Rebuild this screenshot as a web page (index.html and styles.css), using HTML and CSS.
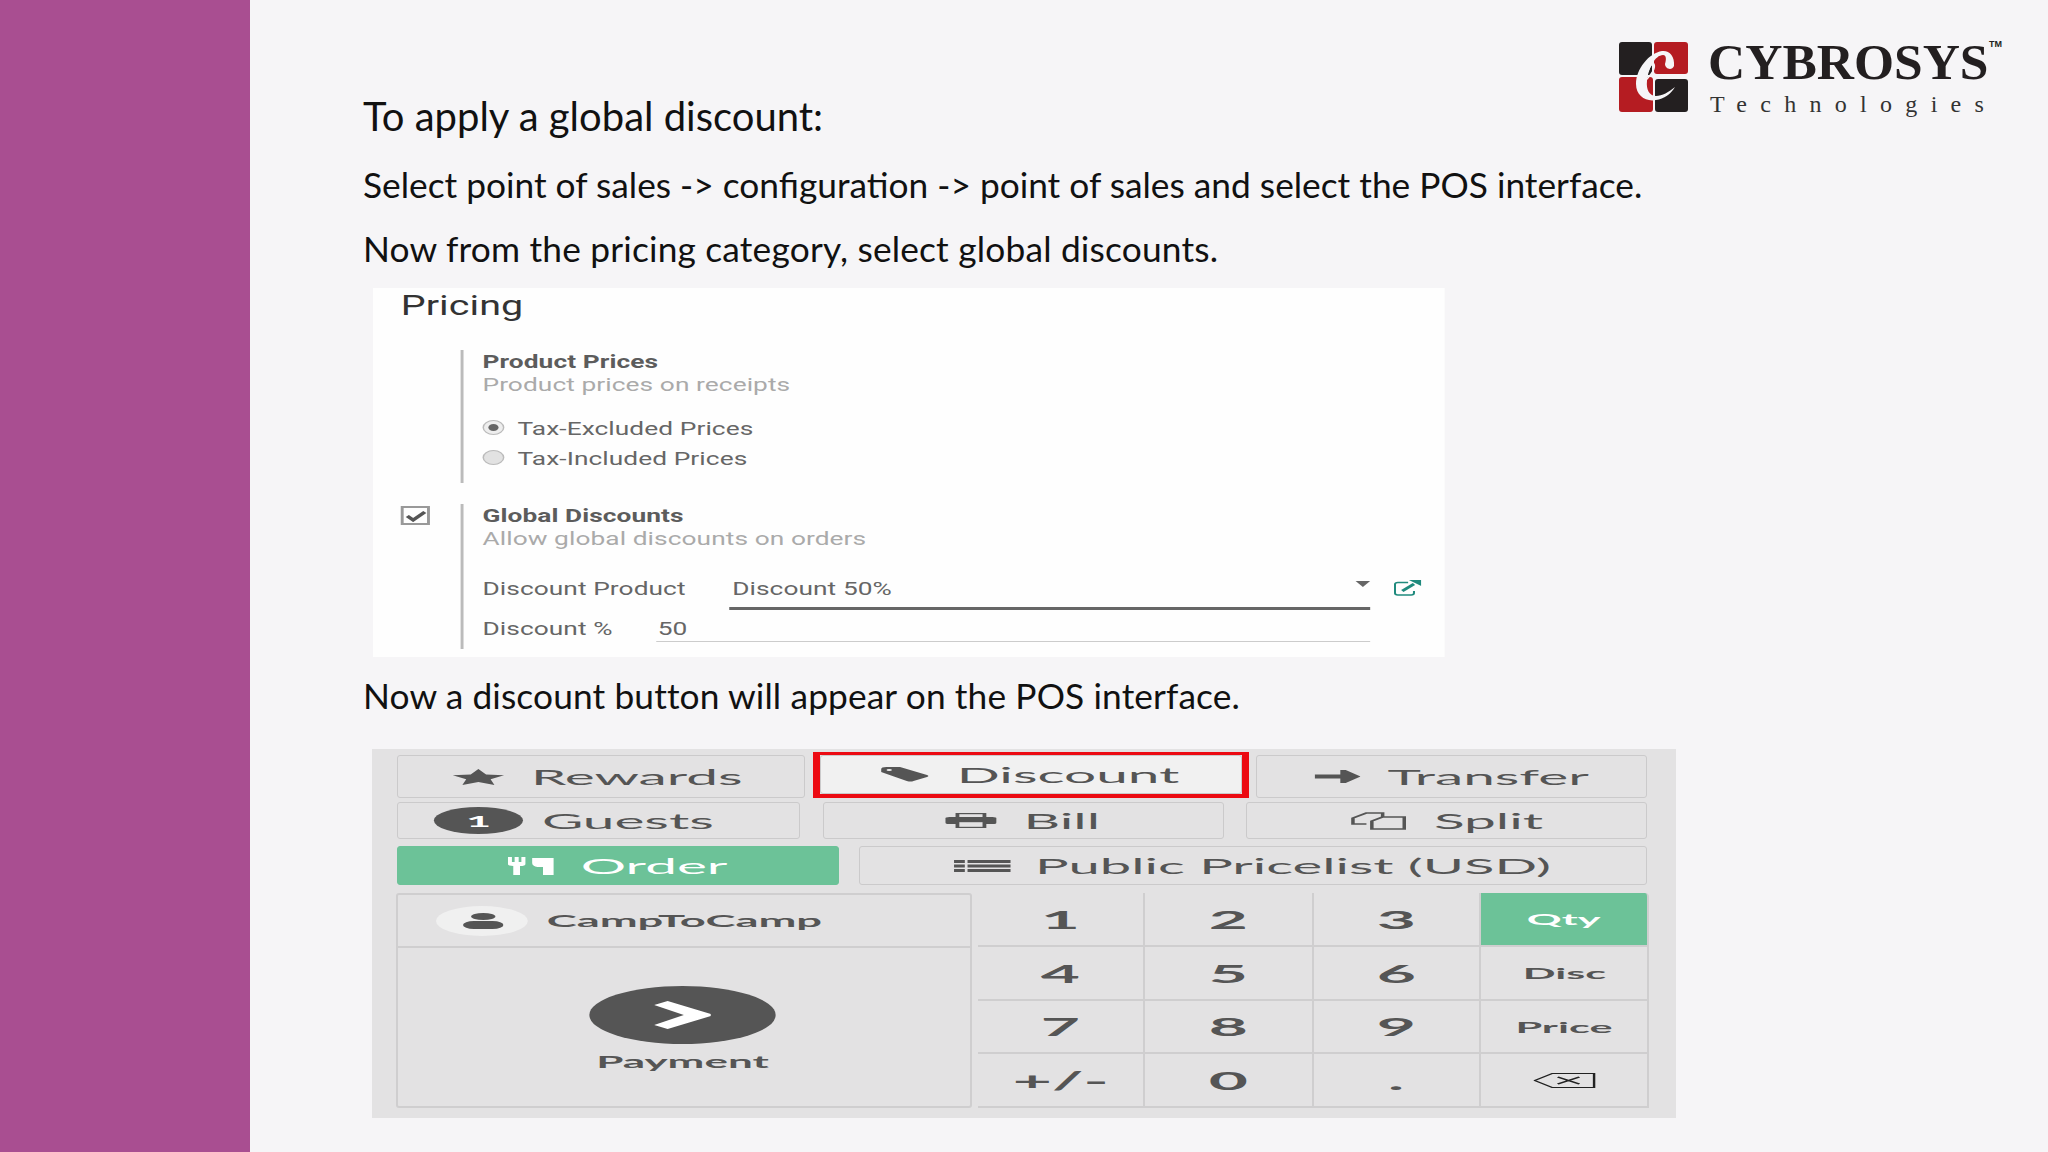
FILE: index.html
```html
<!DOCTYPE html>
<html lang="en">
<head>
    <meta charset="UTF-8">
    <title>Global discount</title>
    <link rel="stylesheet" href="styles.css">
</head>
<body>

<div class="sidebar"></div>

<div class="main">

    <div class="logo">
        <svg class="logo-mark" width="69" height="70" viewBox="0 0 69 70">
            <rect x="0" y="0" width="33" height="33" rx="3" fill="#231f20"/>
            <rect x="35" y="0" width="34" height="32" rx="3" fill="#b51c22"/>
            <rect x="0" y="35" width="34" height="35" rx="3" fill="#b51c22"/>
            <rect x="36" y="37" width="33" height="33" rx="3" fill="#231f20"/>
            <path fill="#f6f5f7" d="M55 24C56 14 50 8 43 9C30 11 17 27 17 42C17 54 27 60 37 58C45 57 52 52 56 45C50 50 43 54 37 54C30 54 27 47 28 39C29 27 36 13 44 13C48 13 47 19 46 22C46 27 53 29 55 24Z"/>
            <path fill="none" stroke="#f6f5f7" stroke-width="1.5" d="M26 39C32 33 37 27 35 22C33 20 28 28 26 39"/>
        </svg>
        <div class="logo-text">
            <div class="logo-name">CYBROSYS<span class="logo-tm">TM</span></div>
            <div class="logo-sub">Technologies</div>
        </div>
    </div>

    <h1 class="title">To apply a global discount:</h1>
    <p class="line line-select">Select point of sales -&gt; configuration -&gt; point of sales and select the POS interface.</p>
    <p class="line line-now">Now from the pricing category, select global discounts.</p>

    <div class="pricing">
        <h2>Pricing</h2>

        <div class="setting setting-prices">
            <div class="check-col"></div>
            <div class="setting-body">
                <div class="setting-title">Product Prices</div>
                <div class="setting-sub">Product prices on receipts</div>
                <div class="radios">
                    <div class="radio-row"><span class="radio on"></span>Tax-Excluded Prices</div>
                    <div class="radio-row"><span class="radio"></span>Tax-Included Prices</div>
                </div>
            </div>
        </div>

        <div class="setting setting-discounts">
            <div class="check-col">
                <div class="checkbox">
                    <svg width="15" height="12" viewBox="0 0 15 12"><path d="M1.5 6L5.5 10L13.5 2" fill="none" stroke="#555" stroke-width="3"/></svg>
                </div>
            </div>
            <div class="setting-body">
                <div class="setting-title">Global Discounts</div>
                <div class="setting-sub">Allow global discounts on orders</div>
                <div class="field field-product">
                    <span class="field-label">Discount Product</span>
                    <span class="field-value">Discount 50%<span class="caret"></span></span>
                    <svg class="ext" width="19" height="16" viewBox="0 0 19 16">
                        <path d="M10 2.5H3Q1 2.5 1 4.5V13Q1 15 3 15H12Q14 15 14 13V11" fill="none" stroke="#1f8a7d" stroke-width="1.4"/>
                        <path d="M6 11L14 4" fill="none" stroke="#1f8a7d" stroke-width="2.4"/>
                        <path d="M10.5 0H19V6Z" fill="#1f8a7d"/>
                    </svg>
                </div>
                <div class="field field-percent">
                    <span class="field-label">Discount %</span>
                    <span class="field-value">50</span>
                </div>
            </div>
        </div>
    </div>

    <p class="line line-appear">Now a discount button will appear on the POS interface.</p>

    <div class="pos">
        <div class="pos-row row-one">
            <div class="btn"><div class="wide wide-rewards">
                <svg width="19" height="16" viewBox="0 0 24 23" preserveAspectRatio="none"><path fill="#555" d="M12 0L15.6 8L24 9L17.7 14.6L19.5 23L12 18.7L4.5 23L6.3 14.6L0 9L8.4 8Z"/></svg>
                Rewards
            </div></div>
            <div class="highlight"><div class="btn btn-light"><div class="wide">
                <svg width="18" height="15" viewBox="0 0 18 15"><path fill="#555" d="M0 2Q0 0 2 0H7L17 8Q18 9 17 10L12 14Q11 15 9.5 14L0 5Z"/><circle cx="3" cy="3" r="1" fill="#f0f0f0"/></svg>
                Discount
            </div></div></div>
            <div class="btn"><div class="wide">
                <svg width="17" height="15" viewBox="0 0 17 15"><path fill="#555" d="M0 5.500H9.500V1L11.500 1L17 7.500L11.500 14H9.500V9.500H0Z"/></svg>
                Transfer
            </div></div>
        </div>

        <div class="pos-row row-two">
            <div class="btn"><div class="wide wide-guests"><span class="guest-badge">1</span>Guests</div></div>
            <div class="btn"><div class="wide">
                <svg width="19" height="15" viewBox="0 0 19 15">
                    <rect x="4.5" y="0.5" width="10" height="5" fill="none" stroke="#555" stroke-width="1.4"/>
                    <rect x="0" y="4" width="19" height="7" rx="1.5" fill="#555"/>
                    <rect x="4.5" y="8.5" width="10" height="6" fill="#e3e2e3" stroke="#555" stroke-width="1.4"/>
                </svg>
                Bill
            </div></div>
            <div class="btn"><div class="wide">
                <svg width="21" height="19" viewBox="0 0 21 19" fill="none" stroke="#555" stroke-width="1.300">
                    <path d="M6 13H1V7L6 2H12V6"/>
                    <path d="M8 18V10L12 6H20V18Z"/>
                </svg>
                Split
            </div></div>
        </div>

        <div class="pos-row row-three">
            <div class="btn btn-green"><div class="wide">
                <svg width="17" height="18" viewBox="0 0 17 18"><path fill="#fff" d="M0 0H1.5V5H2.5V0H4V5H5V0H6.5V7Q6.5 9 4.5 9V18H2V9Q0 9 0 7ZM9 1H17V18H13V10H11Q9 9 9 6Z"/></svg>
                Order
            </div></div>
            <div class="btn"><div class="wide wide-list">
                <svg width="21" height="12" viewBox="0 0 21 12"><path fill="#555" d="M0 0H4V3H0ZM5 0H21V3H5ZM0 4.500H4V7.500H0ZM5 4.500H21V7.500H5ZM0 9H4V12H0ZM5 9H21V12H5Z"/></svg>
                Public Pricelist (USD)
            </div></div>
        </div>

        <div class="pos-bottom">
            <div class="pay-box">
                <div class="customer">
                    <div class="wide wide-left">
                        <span class="customer-pill">
                            <svg width="15" height="16" viewBox="0 0 15 16"><ellipse cx="7.500" cy="3.500" rx="4.500" ry="3.500" fill="#555"/><rect x="0" y="8" width="15" height="8" rx="4" fill="#555"/></svg>
                        </span>
                        CampToCamp
                    </div>
                </div>
                <div class="payment">
                    <div class="wide wide-col">
                        <span class="pay-circle">
                            <svg width="21" height="28" viewBox="0 0 21 28"><path fill="#fff" d="M0 4L5 0L21 13V15L5 28L0 24L11 14Z"/></svg>
                        </span>
                        Payment
                    </div>
                </div>
            </div>
            <div class="numpad">
                <div class="key"><span class="wide">1</span></div>
                <div class="key"><span class="wide">2</span></div>
                <div class="key"><span class="wide">3</span></div>
                <div class="key key-mode key-active"><span class="wide">Qty</span></div>
                <div class="key"><span class="wide">4</span></div>
                <div class="key"><span class="wide">5</span></div>
                <div class="key"><span class="wide">6</span></div>
                <div class="key key-mode"><span class="wide">Disc</span></div>
                <div class="key"><span class="wide">7</span></div>
                <div class="key"><span class="wide">8</span></div>
                <div class="key"><span class="wide">9</span></div>
                <div class="key key-mode"><span class="wide">Price</span></div>
                <div class="key"><span class="wide">+/-</span></div>
                <div class="key"><span class="wide">0</span></div>
                <div class="key"><span class="wide">.</span></div>
                <div class="key key-mode"><span class="wide">
                    <svg width="23" height="15" viewBox="0 0 23 15" fill="none" stroke="#222" stroke-width="1"><path d="M7 .5H22.500V14.500H7L.5 7.500Z"/><path d="M9 4L17 11M17 4L9 11"/></svg>
                </span></div>
            </div>
        </div>
    </div>

</div>

</body>
</html>
```

FILE: styles.css
```css
*{
    margin: 0;
    padding: 0;
    box-sizing: border-box;
}

body{
    display: flex;
    height: 1152px;
    overflow: hidden;
    background: #f6f5f7;
    font-family: "Lato", sans-serif;
    color: #111;
}

.sidebar{
    width: 250px;
    background: #a94e91;
}

.main{
    position: relative;
    flex: 1;
    padding: 94px 0 0 113px;
}

/* logo */
.logo{
    position: absolute;
    top: 42px;
    left: 1369px;
    display: flex;
    gap: 20px;
}

.logo-mark{
    display: block;
}

.logo-name{
    font-family: "Liberation Serif", serif;
    font-weight: 700;
    font-size: 51.500px;
    line-height: 40px;
    height: 40px;
    color: #231f20;
    white-space: nowrap;
}

.logo-tm{
    position: absolute;
    top: -4px;
    left: 370px;
    font-family: "Liberation Sans", sans-serif;
    font-size: 9px;
    line-height: 12px;
}

.logo-sub{
    margin-top: 7px;
    margin-left: 2px;
    font-family: "Liberation Serif", serif;
    font-size: 24px;
    line-height: 30px;
    letter-spacing: 13.300px;
    color: #333;
    white-space: nowrap;
}

/* slide text */
.title{
    font-size: 40px;
    font-weight: 400;
    line-height: 44px;
}

.line{
    font-size: 35.300px;
    line-height: 36px;
    white-space: nowrap;
}

.line-select{
    margin-top: 29px;
}

.line-now{
    margin-top: 28px;
    letter-spacing: 0.190px;
}

.line-appear{
    margin-top: 21px;
    letter-spacing: 0.120px;
}

/* pricing settings picture, stretched sideways like the source */
.pricing{
    width: 734px;
    height: 369px;
    margin-top: 22px;
    margin-left: 10px;
    padding-left: 19px;
    background: #fefefe;
    font-family: "Roboto", sans-serif;
    font-size: 18px;
    letter-spacing: 0.050px;
    color: #666;
    transform: scaleX(1.46);
    transform-origin: left top;
}

.pricing h2{
    font-size: 27px;
    font-weight: 400;
    line-height: 36px;
    color: #333;
    margin-top: -1px;
}

.setting{
    display: flex;
}

.setting-prices{
    margin-top: 26px;
    height: 133px;
}

.setting-discounts{
    margin-top: 21px;
    height: 145px;
}

.check-col{
    width: 41px;
}

.checkbox{
    display: flex;
    justify-content: center;
    align-items: center;
    width: 20px;
    height: 19px;
    margin-top: 2px;
    border: 2px solid #999;
}

.setting-body{
    flex: 1;
    padding-left: 13px;
    border-left: 2px solid #bbb;
}

.setting-title{
    font-weight: 700;
    line-height: 23px;
    color: #5c5c5c;
}

.setting-sub{
    line-height: 23px;
    color: #aaa;
}

.radios{
    margin-top: 18px;
}

.radio-row{
    display: flex;
    line-height: 30px;
}

.radio{
    position: relative;
    width: 15px;
    height: 15px;
    margin: 6px 9px 0 0;
    border: 1px solid #bbb;
    border-radius: 50%;
    background: #e2e2e2;
}

.radio.on{
    background: #eee;
}

.radio.on::after{
    content: "";
    position: absolute;
    top: 3px;
    left: 3px;
    width: 7px;
    height: 7px;
    border-radius: 50%;
    background: #666;
}

.field{
    display: flex;
    align-items: flex-start;
}

.field-product{
    margin-top: 24px;
}

.field-percent{
    margin-top: 6px;
}

.field-product .field-label{
    width: 169px;
    line-height: 30px;
}

.field-percent .field-label{
    width: 119px;
    line-height: 26px;
}

.field-value{
    position: relative;
    padding-left: 2px;
}

.field-percent .field-value{
    width: 489px;
    height: 26px;
    padding-left: 1px;
    line-height: 26px;
    border-bottom: 1px solid #ccc;
}

.field-product .field-value{
    width: 439px;
    height: 36px;
    line-height: 30px;
    border-bottom: 3px solid #666;
}

.caret{
    position: absolute;
    top: 7px;
    right: 0;
    border-style: solid;
    border-width: 6px 5.500px 0;
    border-color: #666 transparent transparent;
}

.ext{
    margin: 6px 0 0 16px;
}

/* POS picture */
.pos{
    width: 1304px;
    height: 369px;
    margin-top: 35px;
    margin-left: 9px;
    padding: 6px 29px 0 25px;
    background: #e3e2e3;
    font-family: "Lato", sans-serif;
    font-size: 21px;
    color: #555;
}

.pos-row{
    display: grid;
}

.row-one{
    grid-template-columns: 408px 436px 391px;
    column-gap: 7.500px;
    height: 38px;
}

.row-two{
    grid-template-columns: 403px 401px 401px;
    column-gap: 22.500px;
    height: 37px;
    margin-top: 9px;
}

.row-three{
    grid-template-columns: 442px 788px;
    column-gap: 20px;
    height: 39px;
    margin-top: 7px;
}

.btn{
    display: flex;
    justify-content: center;
    align-items: center;
    height: 100%;
    border: 1px solid #cbcacb;
    border-radius: 3px;
}

.btn-light{
    background: #f1f1f1;
}

.btn-green{
    background: #6cc298;
    border-color: #6cc298;
    color: #fff;
}

.highlight{
    height: 46px;
    margin-top: -3px;
    border: solid #ec0a12;
    border-width: 3px 7px 4px;
}

.wide{
    display: flex;
    align-items: center;
    gap: 10px;
    white-space: nowrap;
    transform: scaleX(2.700);
}

.wide-rewards{
    margin-right: 7px;
}

.wide-guests{
    gap: 7px;
    margin-right: 50px;
}

.wide-list{
    gap: 9px;
    font-size: 20.800px;
}

.wide-left{
    gap: 7px;
    transform-origin: left center;
    font-size: 16.800px;
    font-weight: 700;
}

.wide-col{
    flex-direction: column;
    gap: 8px;
    margin: 2px 3px 0 0;
    font-size: 16.300px;
    font-weight: 700;
}

.guest-badge{
    display: flex;
    justify-content: center;
    align-items: center;
    width: 33px;
    height: 27px;
    border-radius: 50%;
    background: #555;
    color: #fff;
    font-size: 16px;
    font-weight: 700;
}

.pos-bottom{
    display: grid;
    grid-template-columns: 575px 671px;
    column-gap: 6px;
    height: 215px;
    margin-top: 8px;
}

.pay-box{
    display: flex;
    flex-direction: column;
    margin-left: -1px;
    border: 2px solid #cfcecf;
    border-radius: 3px;
}

.customer{
    display: flex;
    align-items: center;
    height: 53px;
    padding-left: 38px;
    border-bottom: 2px solid #cfcecf;
}

.customer-pill{
    display: flex;
    justify-content: center;
    align-items: center;
    width: 34px;
    height: 30px;
    border-radius: 50%;
    background: #f0f0f0;
}

.payment{
    flex: 1;
    display: flex;
    justify-content: center;
    align-items: center;
}

.pay-circle{
    display: flex;
    justify-content: center;
    align-items: center;
    width: 69px;
    height: 58px;
    border-radius: 50%;
    background: #555;
}

.numpad{
    display: grid;
    grid-template-columns: 167px 168.500px 167.500px 168px;
    grid-template-rows: repeat(4, 1fr);
}

.key{
    display: flex;
    justify-content: center;
    align-items: center;
    border-right: 2px solid #cfcecf;
    border-bottom: 2px solid #cfcecf;
    font-size: 25px;
    font-weight: 700;
}

.key-mode{
    font-size: 16px;
}

.key-active{
    background: #6cc298;
    border-top-right-radius: 4px;
    color: #fff;
}
```
